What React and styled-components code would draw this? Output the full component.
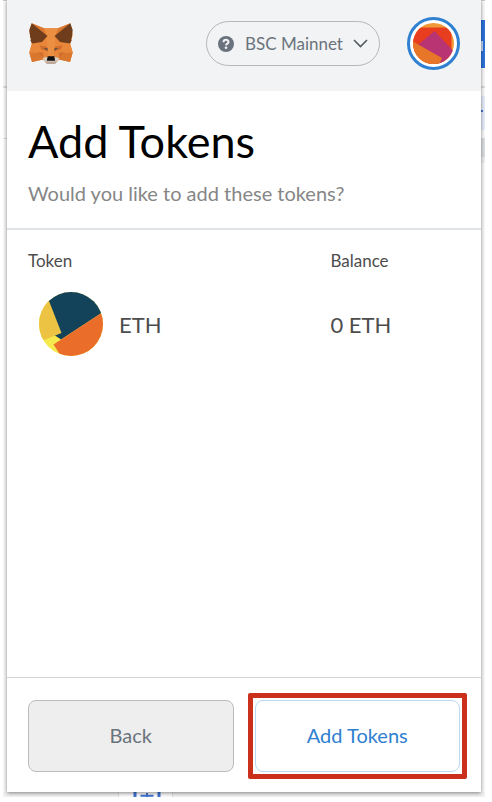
import React from 'react'
import styled, {createGlobalStyle} from 'styled-components'


const GlobalStyle = createGlobalStyle`
    * {
        box-sizing: border-box;
    }
    body {
        margin: 0;
        background: #fff;
        font-family: Lato, "Open Sans", sans-serif;
    }
`

const Frame = styled.div`
    display: grid;
    grid-template-columns: 4px minmax(0, 1fr) 4px;
    grid-template-rows: 1fr 5px;
    min-height: calc(100vh - 5px);
    margin: 0 7px 5px 3px;
    overflow: hidden;
`

const Popup = styled.main`
    display: flex;
    flex-direction: column;
    background: #fff;
    z-index: 1;
    box-shadow: 0 1px 4px 0 #0000007a;
`

// slices of the web page that is open behind the popup
const SideStrip = styled.div`
    overflow: hidden;
    background: #fafafa;
`

const Slice = styled.div`
    height: ${props => props.$size}px;
    background: ${props => props.$color || 'transparent'};
`

const BottomStrip = styled.div`
    grid-column: 1 / -1;
    display: flex;
    overflow: hidden;
    padding-left: 115px;
    background: #f1f1f1;
`

const Tile = styled.div`
    width: 55px;
    padding-left: 14px;
    background: #fafafa;
    border: solid #dcdcdc;
    border-width: 0 1px;
    svg {
        display: block;
    }
`

const Header = styled.header`
    display: flex;
    align-items: center;
    height: 91px;
    padding: 0 21px 4px 22px;
    background: #f2f3f4;
    > svg {
        margin-right: auto;
    }
`

const Network = styled.button`
    display: flex;
    align-items: center;
    width: 174px;
    height: 45px;
    margin-right: 27px;
    padding: 0 11px;
    border: 1px solid #b3b8bd;
    border-radius: 23px;
    background: transparent;
    color: #6a737d;
    font: 17px Lato, sans-serif;
    span {
        flex: 1;
        padding-left: 11px;
        text-align: left;
        white-space: nowrap;
    }
`

const Account = styled.button`
    width: 53px;
    height: 53px;
    padding: 3px;
    border: 3px solid #2f80d0;
    border-radius: 50%;
    background: #fff;
    svg {
        display: block;
    }
`

const Intro = styled.section`
    padding: 24px 21px 23px;
    border-bottom: 2px solid #e0e4e6;
`

const Title = styled.h1`
    margin: 0;
    color: #000;
    font-size: 45px;
    font-weight: 400;
    line-height: 52px;
`

const Subtitle = styled.p`
    margin: 14px 0 0;
    color: #868686;
    font-size: 20px;
    line-height: 24px;
`

const TokenTable = styled.table`
    width: calc(100% - 42px);
    margin: 18px 21px 0;
    border-collapse: collapse;
    table-layout: fixed;
    color: #4d4d4d;
    th, td {
        padding: 0;
        text-align: left;
        font-weight: 400;
    }
    th {
        height: 24px;
        font-size: 17px;
    }
    th:first-child {
        width: 70%;
    }
    td {
        height: 104px;
        font-size: 22px;
    }
`

const TokenName = styled.div`
    display: flex;
    align-items: center;
    gap: 16px;
    padding-left: 11px;
`

const Footer = styled.footer`
    display: grid;
    grid-template-columns: 1fr 1fr;
    gap: 21px;
    margin-top: auto;
    padding: 22px 21px 20px;
    border-top: 1px solid #d2d5d6;
`

const Button = styled.button`
    width: 100%;
    height: 72px;
    padding: 0 0 3px;
    border: 1px solid ${props => props.$primary ? '#b9d8f3' : '#b9bbbc'};
    border-radius: 8px;
    background: ${props => props.$primary ? '#fff' : '#eee'};
    color: ${props => props.$primary ? '#2f80d0' : '#6a737d'};
    font: 20px Lato, sans-serif;
`

const Highlight = styled.div`
    position: relative;
    &::after {
        content: '';
        position: absolute;
        inset: -7px;
        border: 5px solid #cb301c;
        border-radius: 2px;
        pointer-events: none;
    }
`

const Fox = () => (
    <svg width="44" height="42" viewBox="0 0 44 42" aria-hidden="true">
        <path fill="#e8873a" d="M15 5.3h14L41.3.3 43.7 12l-2.4 9 2.4 8.5-2.7 9.5-11-2.5-4 4h-8l-4-4L3 39 .3 29.5l2.4-9L.3 8 2.7.3z" />
        <path fill="#d9772f" d="M2.7.3l15 12.5L15 5.3zM41.3.3l-15 12.5L29 5.3zM.3 29.5h12L14 36.5 3 39zM43.7 29.5h-12L30 36.5 41 39z" />
        <path fill="#eb8f43" d="M15 5.3h14l-2.7 8.2L25 33h-6l-1.3-19.5z" />
        <path fill="#e8873a" d="M3 20.5l9.5-1.7-2.8 10.7H.3zM41 20.5l-9.5-1.7 2.8 10.7h9.4z" />
        <path fill="#6f3d1c" d="M2.7.3L.3 7l1 8 .7.6-.6 2 1.6 3 10-1.7 5.5-6zM41.3.3l2.4 6.7-1 8-.7.6.6 2-1.6 3-10-1.7-5.5-6z" />
        <path fill="#d16e2d" d="M10.5 22.5l7.5 1 1.2 5-7-2zM33.5 22.5l-7.5 1-1.2 5 7-2zM8.5 29.5h5.7V35zM35.5 29.5h-5.7V35z" />
        <path fill="#514c49" d="M14.5 25l4 .2v2.4zM29.5 25l-4 .2v2.4z" />
        <path fill="#dacfc5" d="M13.5 35l5-1h7l5 1-4.5 6h-8z" />
        <path fill="#bda99b" d="M15.5 38l3 .5h7l3-.5-2.500 3h-8z" />
        <path fill="#111" d="M18.7 33.2h6.6l.9 4.5h-8.4z" />
    </svg>
)

const AccountIcon = () => (
    <svg width="41" height="41" viewBox="0 0 41 41" aria-hidden="true">
        <clipPath id="account">
            <circle cx="20.5" cy="20.5" r="20.5" />
        </clipPath>
        <g clipPath="url(#account)">
            <path fill="#f09a37" d="M0 0h41v41H0z" />
            <path fill="#e93d20" d="M0 4.5h38.5V41H0z" />
            <path fill="#b93472" d="M21.5 8L46 34 28 43 5 22z" />
            <path fill="#e87629" d="M0 18.5L29 35l-4 9H0z" />
        </g>
    </svg>
)

const TokenIcon = () => (
    <svg width="64" height="64" viewBox="0 0 64 64" aria-hidden="true">
        <clipPath id="token">
            <circle cx="32" cy="32" r="32" />
        </clipPath>
        <g clipPath="url(#token)">
            <path fill="#f5e94d" d="M0 0h64v64H0z" />
            <path fill="#13425b" d="M8 0h56v20L22 47.500l-6-4z" />
            <path fill="#ecc342" d="M-2 0h8l4 9 12.5 32L0 50z" />
            <path fill="#ea6d29" d="M64 20v44H22L14.5 52.5z" />
        </g>
    </svg>
)

const tokens = [
    {symbol: 'ETH', balance: '0 ETH'},
]

const App = () => {
    return (
        <>
        <GlobalStyle />
        <Frame>
            <SideStrip>
                <Slice $size={1} $color="#ccc" />
                <Slice $size={85} />
                <Slice $size={2} $color="#ddd" />
                <Slice $size={50} />
                <Slice $size={1} $color="#ddd" />
            </SideStrip>

            <Popup>
                <Header>
                    <Fox />
                    <Network type="button">
                        <svg width="16" height="16" viewBox="0 0 16 16" aria-hidden="true">
                            <circle cx="8" cy="8" r="8" fill="#6a737d" />
                            <path d="M5.5 6.2C5.7 3 10.7 3.2 10.5 6.1 10.4 7.600 8.2 7.700 8 9.400" fill="none" stroke="#f2f3f4" strokeWidth="2" />
                            <circle cx="8" cy="11.8" r="1.3" fill="#f2f3f4" />
                        </svg>
                        <span>BSC Mainnet</span>
                        <svg width="15" height="9" viewBox="0 0 15 9" aria-hidden="true">
                            <path d="M1 1l6.5 6.5L14 1" fill="none" stroke="#555b61" strokeWidth="1.6" />
                        </svg>
                    </Network>
                    <Account type="button" aria-label="Account">
                        <AccountIcon />
                    </Account>
                </Header>

                <Intro>
                    <Title>Add Tokens</Title>
                    <Subtitle>Would you like to add these tokens?</Subtitle>
                </Intro>

                <TokenTable>
                    <thead>
                        <tr>
                            <th scope="col">Token</th>
                            <th scope="col">Balance</th>
                        </tr>
                    </thead>
                    <tbody>
                        {tokens.map(token => (
                            <tr key={token.symbol}>
                                <td>
                                    <TokenName>
                                        <TokenIcon />
                                        {token.symbol}
                                    </TokenName>
                                </td>
                                <td>{token.balance}</td>
                            </tr>
                        ))}
                    </tbody>
                </TokenTable>

                <Footer>
                    <Button type="button">Back</Button>
                    <Highlight>
                        <Button type="button" $primary>Add Tokens</Button>
                    </Highlight>
                </Footer>
            </Popup>

            <SideStrip>
                <Slice $size={1} $color="#ccc" />
                <Slice $size={19} />
                <Slice $size={21} $color="#2d72dc" />
                <Slice $size={10} $color="linear-gradient(to right, #c5d6f1 2px, #2d72dc 2px)" />
                <Slice $size={17} $color="#2d72dc" />
                <Slice $size={18} />
                <Slice $size={2} $color="#ddd" />
                <Slice $size={8} />
                <Slice $size={14} $color="#e5ecfa" />
                <Slice $size={2} $color="linear-gradient(to right, #3f72cf 2px, #e5ecfa 2px)" />
                <Slice $size={18} $color="#e5ecfa" />
                <Slice $size={8} />
                <Slice $size={19} $color="#dde0e3" />
                <Slice $size={6} $color="#eee" />
            </SideStrip>

            <BottomStrip>
                <Tile>
                    <svg width="28" height="5" viewBox="0 0 28 5" aria-hidden="true">
                        <path d="M2 0v5M26 0v5" stroke="#3f72cf" strokeWidth="3" />
                        <path d="M14 1v4M7.5 3.8h13" stroke="#3f72cf" strokeWidth="2" />
                    </svg>
                </Tile>
            </BottomStrip>
        </Frame>
        </>
    )
}

export default App
